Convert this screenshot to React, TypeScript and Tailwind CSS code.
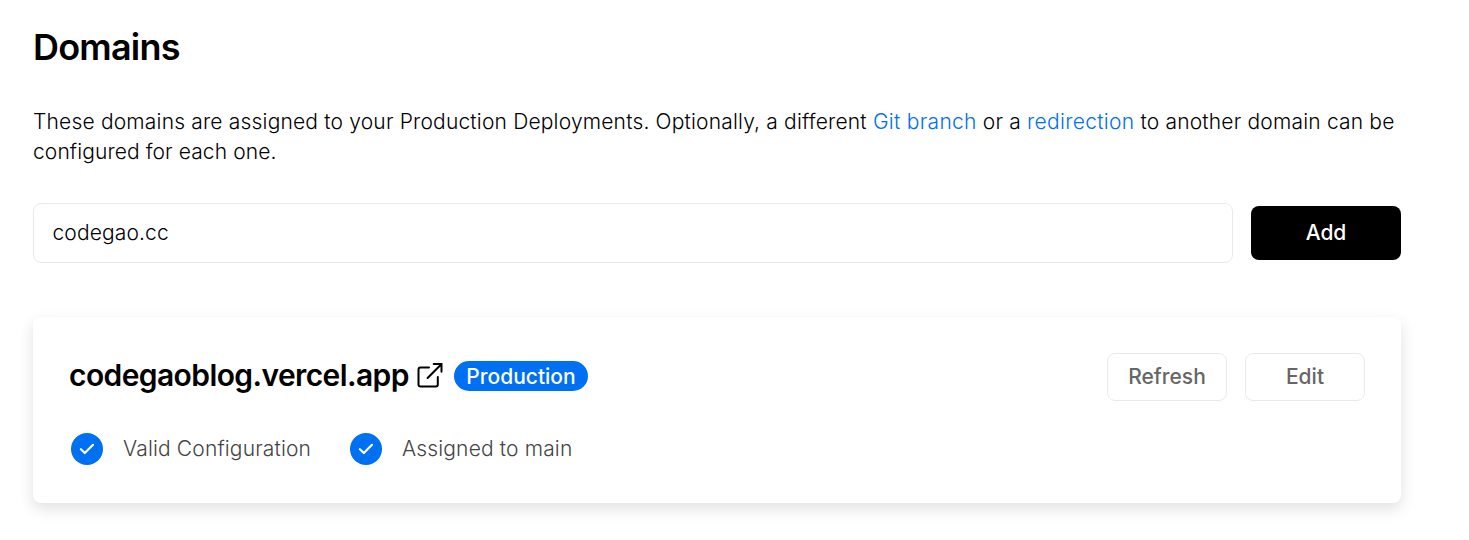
import React from "react";

function Check() {
  return (
    <svg className="block size-8 shrink-0" viewBox="0 0 32 32" fill="none">
      <circle cx="16" cy="16" r="16" fill="#0070f3" />
      <path d="M9.9 16.2L13.8 20L22 11.8" stroke="#fff" strokeWidth="2.2" strokeLinecap="round" strokeLinejoin="round" />
    </svg>
  );
}

export default function App() {
  return (
    <main className="h-[540px] w-[1469px] overflow-hidden bg-white pl-[33px] pr-[68px] pt-[23px] font-['Inter',sans-serif] text-black">
      <h1 className="h-12 text-[36px] font-semibold leading-[48px] tracking-[-0.8px]">Domains</h1>
      <p className="mt-9 whitespace-nowrap text-[21px] font-light leading-[30px] tracking-[0.18px]">
        These domains are assigned to your Production Deployments. Optionally, a different{" "}
        <a className="tracking-[0.3px] text-[#0070f3]">Git branch</a> or a <a className="tracking-[0.3px] text-[#0070f3]">redirection</a> to another domain can be
        <br />
        <span className="tracking-[0.1px]">configured for each one.</span>
      </p>
      <div className="mt-9 flex items-center gap-[18px]">
        <div className="flex h-[60px] w-[1200px] items-center rounded-lg border border-[#eaeaea] px-[18.5px] text-[21px] font-light tracking-[0.12px]">codegao.cc</div>
        <button className="h-[54px] w-[150px] rounded-lg bg-black text-[21px] font-medium text-white">Add</button>
      </div>
      <section className="mt-[54px] h-[186px] w-[1368px] rounded-lg bg-white px-9 pt-9 shadow-[0_6px_15px_rgba(0,0,0,0.12)]">
        <div className="flex h-12 items-start justify-between">
          <div className="flex h-[46px] items-center">
            <h2 className="w-[340px] whitespace-nowrap pb-px text-[30px] font-semibold leading-[45px] tracking-[-0.6px]">codegaoblog.vercel.app</h2>
            <svg className="mb-[2px] ml-1.5 size-[30px]" viewBox="0 0 30 30" fill="none" stroke="currentColor" strokeWidth="2" strokeLinecap="round">
              <path d="M14 7.5H5.5a2 2 0 0 0-2 2v15a2 2 0 0 0 2 2h15.3a2 2 0 0 0 2-2V17" />
              <path d="M12.6 18L26.3 4.2M18.7 4H26.5V11.8" />
            </svg>
            <span className="ml-[9px] flex h-[30px] w-[134px] items-center justify-center rounded-full bg-[#0070f3] pt-px text-[21px] font-medium leading-[29px] text-white">Production</span>
          </div>
          <div className="flex gap-[18px] text-[21px] font-medium text-[#666]">
            <button className="h-12 w-[120px] rounded-lg border border-[#eaeaea]">Refresh</button>
            <button className="h-12 w-[120px] rounded-lg border border-[#eaeaea]">Edit</button>
          </div>
        </div>
        <div className="mt-8 flex items-center pl-[2px] text-[21px] font-light tracking-[0.15px] text-[#444]">
          <Check />
          <span className="ml-5 w-[188px] whitespace-nowrap">Valid Configuration</span>
          <span className="ml-[39px]"><Check /></span>
          <span className="ml-5">Assigned to main</span>
        </div>
      </section>
    </main>
  );
}
